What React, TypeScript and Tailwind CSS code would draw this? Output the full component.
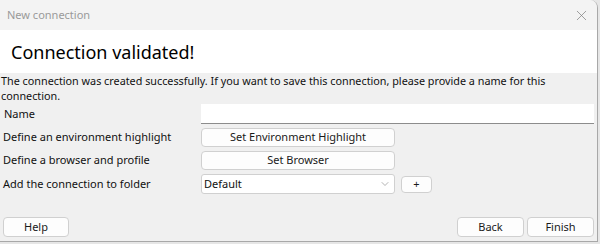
import { X, ChevronDown } from "lucide-react";

const font = { fontFamily: '"Noto Sans", "Segoe UI", sans-serif' };

function WinButton({ children, className = "" }: { children: React.ReactNode; className?: string }) {
  return (
    <button
      className={`flex items-center justify-center rounded-[4px] border border-[#d0d0d0] bg-[#fdfdfd] text-[11px] text-[#1a1a1a] ${className}`}
    >
      {children}
    </button>
  );
}

export default function App() {
  return (
    <div className="h-[244px] w-[600px] bg-[#e6e6e6]" style={font}>
      <div className="flex h-[242px] w-[598px] flex-col overflow-hidden rounded-tr-[8px] border-r border-b border-[#a8a8a8] bg-[#f0f0f0]">
        <div className="flex h-[30px] shrink-0 items-center justify-between bg-[#f3f3f3] pl-[7px] pr-[7px]">
          <span className="text-[11px] text-[#9a9a9a]">New connection</span>
          <X size={17} strokeWidth={1} className="text-[#7a7a7a]" />
        </div>
        <div className="flex h-[43px] shrink-0 items-center bg-white pl-[11px]">
          <h1 className="text-[18px] leading-none text-black">Connection validated!</h1>
        </div>
        <p className="pl-[1px] text-[10.8px] leading-[15px] text-[#111]">
          <span className="whitespace-nowrap">
            The connection was created successfully. If you want to save this connection, please provide a name for this
          </span>
          <br />
          connection.
        </p>
        <div className="mt-[1px] grid grid-cols-[198px_194px_auto] items-center gap-y-[4px] pl-[3px] text-[11px] text-[#111]">
          <span className="pl-[1px]">Name</span>
          <div className="col-span-2 h-[20px] w-[393px] border-b border-[#8c8c8c] bg-white" />
          <span>Define an environment highlight</span>
          <WinButton className="h-[19px] w-[194px]">Set Environment Highlight</WinButton>
          <span />
          <span>Define a browser and profile</span>
          <WinButton className="h-[19px] w-[194px]">Set Browser</WinButton>
          <span />
          <span>Add the connection to folder</span>
          <div className="flex h-[20px] w-[194px] items-center justify-between rounded-[3px] border border-[#d0d0d0] bg-white pl-[2px] pr-[3px]">
            <span>Default</span>
            <ChevronDown size={12} strokeWidth={1} className="text-[#666]" />
          </div>
          <WinButton className="ml-[6px] h-[17px] w-[31px]">+</WinButton>
        </div>
        <div className="mt-auto mb-[4px] flex items-center px-[3px]">
          <WinButton className="h-[20px] w-[66px]">Help</WinButton>
          <div className="flex-1" />
          <WinButton className="h-[20px] w-[67px]">Back</WinButton>
          <WinButton className="ml-[3px] h-[20px] w-[67px]">Finish</WinButton>
        </div>
      </div>
    </div>
  );
}
